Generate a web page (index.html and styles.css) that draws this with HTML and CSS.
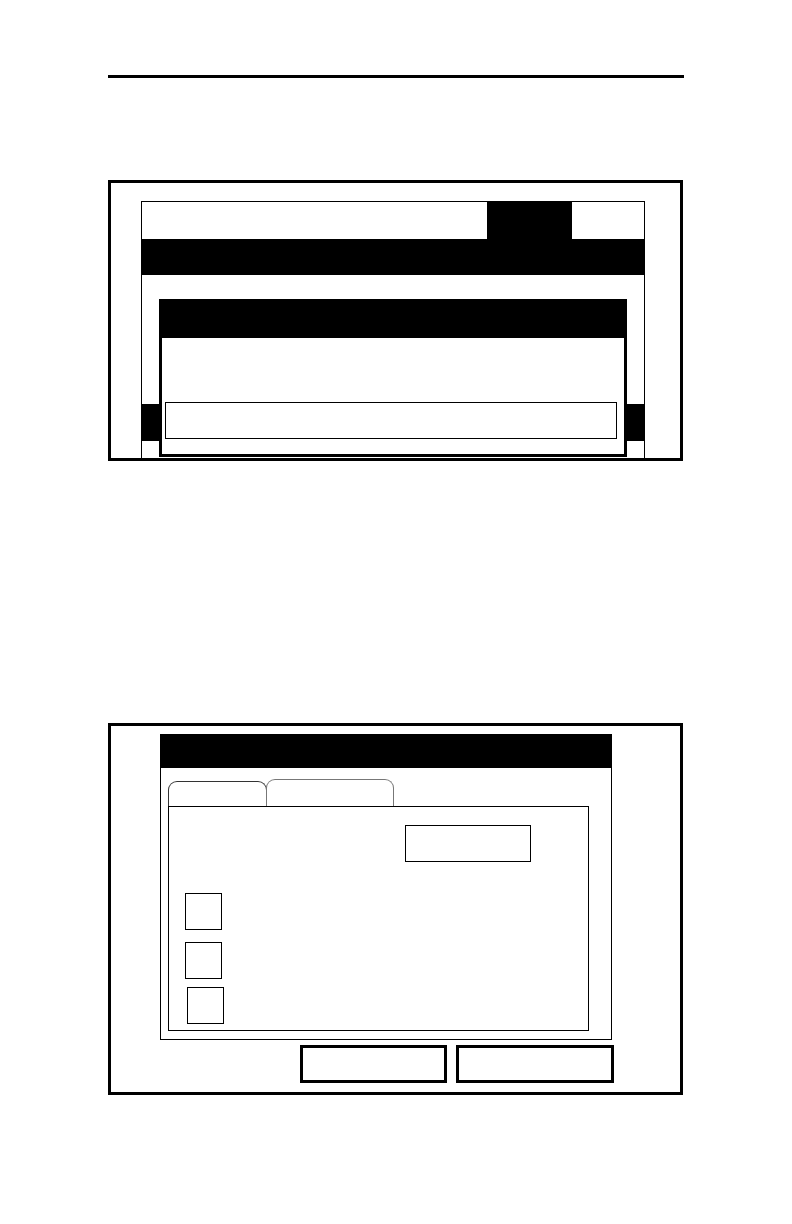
FILE: index.html
```html
<!DOCTYPE html>
<html>
<head>
<meta charset="utf-8">
<link rel="stylesheet" href="styles.css">
</head>
<body>
<div class="page">
  <div class="rule"></div>

  <div class="frame frame-one">
    <div class="screen">
      <div class="screen-top">
        <div class="top-space"></div>
        <div class="top-block"></div>
        <div class="top-end"></div>
      </div>
      <div class="screen-bar"></div>
      <div class="list-gap"></div>
      <div class="list-row selected"></div>
      <div class="list-row"></div>
    </div>
    <div class="dialog">
      <div class="dialog-head"></div>
      <div class="dialog-field"></div>
    </div>
  </div>

  <div class="frame frame-two">
    <div class="panel">
      <div class="panel-head"></div>
      <div class="tabs">
        <div class="tab tab-first"></div>
        <div class="tab tab-second"></div>
      </div>
      <div class="tab-body">
        <div class="value-box"></div>
        <div class="check check-one"></div>
        <div class="check check-two"></div>
        <div class="check check-three"></div>
      </div>
    </div>
    <div class="buttons">
      <div class="btn btn-one"></div>
      <div class="btn btn-two"></div>
    </div>
  </div>
</div>
</body>
</html>
```

FILE: styles.css
```css
html, body {
  margin: 0;
  padding: 0;
  background: #ffffff;
  font-family: "Liberation Sans", Arial, sans-serif;
}

.page {
  width: 792px;
  height: 1224px;
  padding: 75px 0 0 108px;
  box-sizing: border-box;
}

.rule {
  width: 576px;
  height: 3px;
  background: #000;
}

.frame {
  position: relative;
  width: 575px;
  border: 3px solid #000;
  box-sizing: border-box;
  overflow: hidden;
}

.frame-one {
  margin-top: 102px;
  height: 281px;
}

.frame-two {
  margin-top: 262px;
  height: 372px;
}

/* ---------- first screen ---------- */
.screen {
  margin: 18px 0 0 30px;
  width: 504px;
  height: 320px;
  border: 1px solid #000;
  box-sizing: border-box;
}

.screen-top {
  display: flex;
  height: 37px;
}

.top-space { flex: 1; }
.top-block { width: 85px; background: #000; }
.top-end { width: 72px; }

.screen-bar {
  height: 36px;
  background: #000;
}

.list-gap { height: 129px; }

.list-row { height: 37px; }
.list-row.selected { background: #000; }

.dialog {
  position: absolute;
  left: 48px;
  top: 116px;
  width: 468px;
  height: 158px;
  border: 3px solid #000;
  border-top: 0;
  box-sizing: border-box;
  background: #fff;
}

.dialog-head {
  height: 39px;
  margin: 0 -3px;
  background: #000;
}

.dialog-field {
  margin: 64px 0 0 3px;
  width: 452px;
  height: 37px;
  border: 1px solid #000;
  box-sizing: border-box;
}

/* ---------- second screen ---------- */
.panel {
  margin: 8px 0 0 49px;
  width: 452px;
  height: 306px;
  border: 1px solid #000;
  border-top: 0;
  box-sizing: border-box;
}

.panel-head {
  height: 34px;
  margin: 0 -1px;
  background: #000;
}

.tabs {
  display: flex;
  align-items: flex-end;
  height: 27px;
  margin: 11px 0 0 7px;
}

.tab {
  box-sizing: border-box;
  border: 1px solid #333;
  border-bottom: 0;
  border-radius: 9px 9px 0 0;
}

.tab-first {
  width: 99px;
  height: 25px;
}

.tab-second {
  width: 128px;
  height: 27px;
  margin-left: -1px;
  border-color: #777;
}

.tab-body {
  position: relative;
  margin-left: 7px;
  width: 421px;
  height: 225px;
  border: 1px solid #000;
  box-sizing: border-box;
  padding: 18px 0 0 16px;
}

.value-box {
  margin-left: 220px;
  width: 126px;
  height: 37px;
  border: 1px solid #000;
  box-sizing: border-box;
}

.check {
  width: 37px;
  height: 37px;
  border: 1px solid #000;
  box-sizing: border-box;
}

.check-one { margin-top: 31px; }
.check-two { margin-top: 12px; }
.check-three { margin-top: 8px; margin-left: 2px; }

.buttons {
  display: flex;
  gap: 9px;
  margin: 5px 0 0 189px;
}

.btn {
  height: 38px;
  border: 3px solid #000;
  box-sizing: border-box;
}

.btn-one { width: 147px; }
.btn-two { width: 158px; }
```
